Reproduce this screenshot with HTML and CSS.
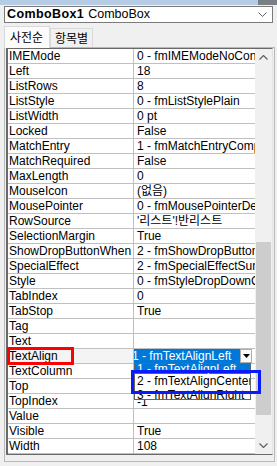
FILE: index.html
```html
<!DOCTYPE html>
<html lang="ko">
<head>
<meta charset="utf-8">
<link rel="stylesheet" href="styles.css">
</head>
<body>
<div class="titlebar"><span class="titlebar-edge"></span></div>
<div class="combo">
  <span class="combo-name">ComboBox1</span>
  <span class="combo-type">ComboBox</span>
  <svg class="combo-chev" width="9" height="6" viewBox="0 0 9 6"><path d="M0.5 0.5 L4.5 4.5 L8.5 0.5" fill="none" stroke="#606060" stroke-width="1"/></svg>
</div>
<div class="tabs">
  <div class="tab tab-active">사전순</div>
  <div class="tab">항목별</div>
</div>
<div class="panel">
  <div class="grid">
    <div class="rows">
      <div class="row"><div class="name">IMEMode</div><div class="val">0 - fmIMEModeNoControl</div></div>
      <div class="row"><div class="name">Left</div><div class="val">18</div></div>
      <div class="row"><div class="name">ListRows</div><div class="val">8</div></div>
      <div class="row"><div class="name">ListStyle</div><div class="val">0 - fmListStylePlain</div></div>
      <div class="row"><div class="name">ListWidth</div><div class="val">0 pt</div></div>
      <div class="row"><div class="name">Locked</div><div class="val">False</div></div>
      <div class="row"><div class="name">MatchEntry</div><div class="val">1 - fmMatchEntryComplete</div></div>
      <div class="row"><div class="name">MatchRequired</div><div class="val">False</div></div>
      <div class="row"><div class="name">MaxLength</div><div class="val">0</div></div>
      <div class="row"><div class="name">MouseIcon</div><div class="val">(없음)</div></div>
      <div class="row"><div class="name">MousePointer</div><div class="val">0 - fmMousePointerDefault</div></div>
      <div class="row"><div class="name">RowSource</div><div class="val">'리스트'!반리스트</div></div>
      <div class="row"><div class="name">SelectionMargin</div><div class="val">True</div></div>
      <div class="row"><div class="name">ShowDropButtonWhen</div><div class="val">2 - fmShowDropButtonWhenAlways</div></div>
      <div class="row"><div class="name">SpecialEffect</div><div class="val">2 - fmSpecialEffectSunken</div></div>
      <div class="row"><div class="name">Style</div><div class="val">0 - fmStyleDropDownCombo</div></div>
      <div class="row"><div class="name">TabIndex</div><div class="val">0</div></div>
      <div class="row"><div class="name">TabStop</div><div class="val">True</div></div>
      <div class="row"><div class="name">Tag</div><div class="val"></div></div>
      <div class="row"><div class="name">Text</div><div class="val"></div></div>
      <div class="row row-edit">
        <div class="name name-sel">TextAlign</div>
        <div class="val val-edit">
          <div class="editor">
            <span class="editor-text">1 - fmTextAlignLeft</span>
            <span class="editor-btn"><svg width="7" height="4" viewBox="0 0 7 4"><path d="M0 0 H7 L3.5 4 Z" fill="#000"/></svg></span>
          </div>
          <div class="droplist">
            <div class="item item-1 item-sel">1 - fmTextAlignLeft</div>
            <div class="item item-2">2 - fmTextAlignCenter</div>
            <div class="item item-3">3 - fmTextAlignRight</div>
          </div>
        </div>
        <div class="mark mark-red"></div>
        <div class="mark mark-blue"></div>
      </div>
      <div class="row"><div class="name">TextColumn</div><div class="val"></div></div>
      <div class="row"><div class="name">Top</div><div class="val"></div></div>
      <div class="row"><div class="name">TopIndex</div><div class="val val-low">-1</div></div>
      <div class="row"><div class="name">Value</div><div class="val"></div></div>
      <div class="row"><div class="name">Visible</div><div class="val">True</div></div>
      <div class="row"><div class="name">Width</div><div class="val">108</div></div>
    </div>
    <div class="scrollbar">
      <div class="sb-btn"><svg width="9" height="5" viewBox="0 0 9 5"><path d="M0.5 4.5 L4.5 0.5 L8.5 4.5" fill="none" stroke="#606060" stroke-width="1.2"/></svg></div>
      <div class="sb-track"><div class="sb-thumb"></div></div>
      <div class="sb-btn"><svg width="9" height="5" viewBox="0 0 9 5"><path d="M0.5 0.5 L4.5 4.5 L8.5 0.5" fill="none" stroke="#606060" stroke-width="1.2"/></svg></div>
    </div>
  </div>
</div>
</body>
</html>
```
FILE: styles.css
```css
* { box-sizing: border-box; }
html, body { margin: 0; padding: 0; }
body {
  width: 277px;
  height: 466px;
  overflow: hidden;
  background: #f0f0f0;
  color: #000;
  font-family: "Liberation Sans", "Noto Sans CJK KR", sans-serif;
  font-size: 12px;
}
.titlebar {
  height: 5px;
  background: #b6cbe4;
  display: flex;
  justify-content: flex-end;
}
.titlebar-edge {
  width: 19px;
  background: #7a7f86;
}
.combo {
  margin: 1px 4px 0 4px;
  height: 17px;
  border: 1px solid #7a7a7a;
  background: #fff;
  display: flex;
  align-items: center;
  padding-left: 2px;
  line-height: 15px;
  white-space: nowrap;
}
.combo-name { font-weight: bold; font-size: 12.5px; letter-spacing: 0.4px; }
.combo-type { margin-left: 4px; font-size: 12.5px; }
.combo-chev { margin-left: auto; margin-right: 5px; }
.tabs {
  display: flex;
  align-items: flex-end;
  height: 21px;
  margin: 3px 0 0 4px;
  position: relative;
  z-index: 1;
}
.tab {
  height: 19px;
  padding: 0 4px;
  border: 1px solid #d9d9d9;
  border-bottom: none;
  background: #f0f0f0;
  font-family: "Noto Sans CJK KR", sans-serif;
  font-size: 12px;
  line-height: 17px;
}
.tab-active {
  height: 22px;
  width: 46px;
  margin-bottom: -1px;
  background: #fbfbfb;
  padding-left: 5px;
  line-height: 20px;
}
.panel {
  margin: 0 2px 0 4px;
  border: 1px solid #b9b9b9;
  padding: 0 1px 6px 1px;
}
.grid {
  display: flex;
  border-top: 1px solid #696969;
  border-left: 2px solid #696969;
  border-right: 1px solid #e3e3e3;
  border-bottom: 1px solid #696969;
}
.rows { width: 247px; }
.row {
  display: flex;
  height: 15px;
  border-bottom: 1px solid #c0c0c0;
  background: #fff;
  line-height: 14px;
  white-space: nowrap;
}
.name {
  width: 126px;
  border-right: 1px solid #c0c0c0;
  padding-left: 1px;
  overflow: hidden;
}
.val {
  width: 121px;
  padding-left: 3px;
  overflow: hidden;
}
.val-low { line-height: 16px; }
.row-edit { position: relative; z-index: 2; }
.name-sel { background: #f4f4f4; }
.val-edit { position: relative; overflow: visible; padding: 0; }
.editor {
  display: flex;
  height: 14px;
  width: 118px;
  background: #fff;
}
.editor-text {
  width: 106px;
  background: #0078d7;
  color: #fff;
  text-indent: -2px;
  overflow: hidden;
  line-height: 14px;
}
.editor-btn {
  width: 12px;
  height: 14px;
  border: 1px solid #adadad;
  background: #fafafa;
  display: flex;
  align-items: center;
  justify-content: center;
}
.droplist {
  position: absolute;
  left: 0;
  top: 14px;
  width: 117px;
  height: 37px;
  border: 1px solid #646464;
  background: #fff;
  overflow: hidden;
}
.item {
  padding-left: 2px;
  overflow: hidden;
  white-space: nowrap;
}
.item-1 { height: 10px; line-height: 11px; }
.item-2 { height: 14px; line-height: 14px; }
.item-3 { height: 12px; line-height: 14px; }
.item-sel { background: #0078d7; color: #fff; }
.mark { position: absolute; pointer-events: none; }
.mark-red {
  left: -1px;
  top: -2px;
  width: 67px;
  height: 18px;
  border: 3px solid #ff0000;
}
.mark-blue {
  left: 123px;
  top: 21px;
  width: 130px;
  height: 24px;
  border: 3px solid #0a1aff;
}
.scrollbar {
  width: 17px;
  display: flex;
  flex-direction: column;
  background: #f0f0f0;
}
.sb-btn {
  height: 17px;
  display: flex;
  align-items: center;
  justify-content: center;
}
.sb-track {
  flex: 1;
  display: flex;
  flex-direction: column;
}
.sb-thumb {
  margin: 176px 1px 0 1px;
  height: 173px;
  background: #cdcdcd;
}
```
